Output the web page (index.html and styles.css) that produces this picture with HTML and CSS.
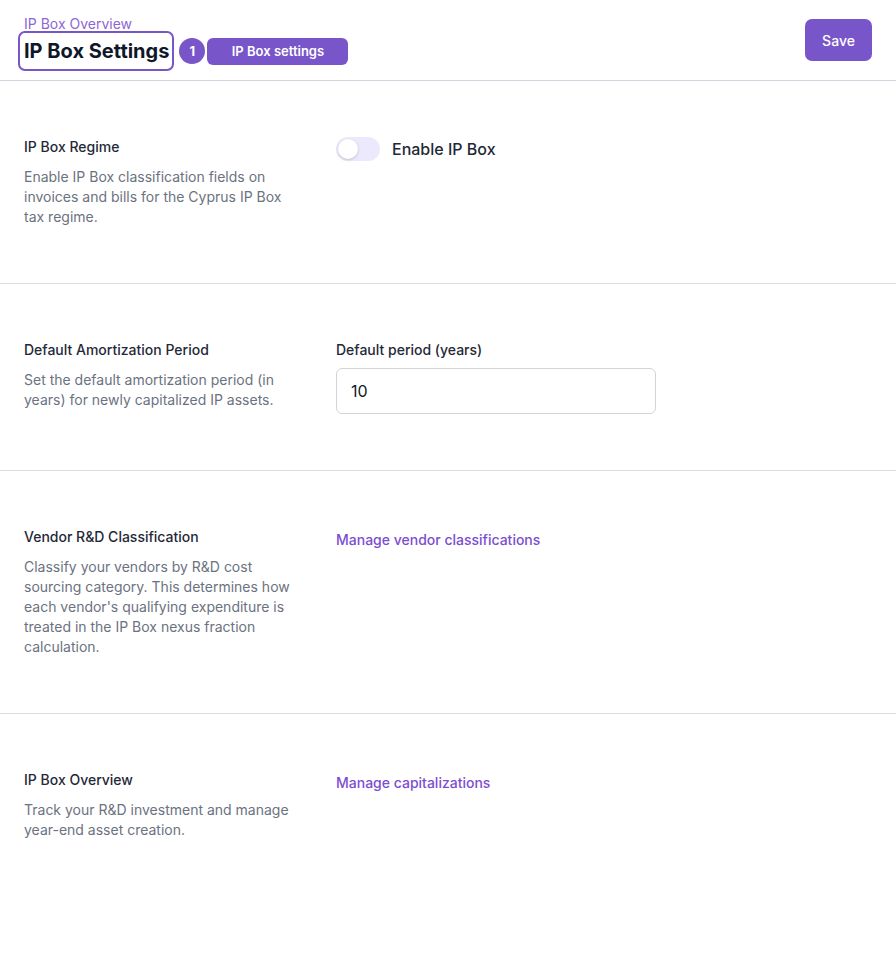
FILE: index.html
```html
<!DOCTYPE html>
<html lang="en">
<head>
<meta charset="utf-8">
<title>IP Box Settings</title>
<link rel="stylesheet" href="styles.css">
</head>
<body>
<header class="page-header">
  <div class="header-left">
    <a class="breadcrumb" href="#">IP Box Overview</a>
    <div class="title-row">
      <h1 class="title">IP Box Settings</h1>
      <span class="step-badge">1</span>
      <span class="step-pill">IP Box settings</span>
    </div>
  </div>
  <button class="btn-save" type="button">Save</button>
</header>

<main>
  <section class="setting">
    <div class="setting-info">
      <h2 class="setting-title">IP Box Regime</h2>
      <p class="setting-desc">Enable IP Box classification fields on invoices and bills for the Cyprus IP Box tax regime.</p>
    </div>
    <div class="setting-control">
      <label class="toggle-row">
        <span class="toggle"><span class="knob"></span></span>
        <span class="toggle-label">Enable IP Box</span>
      </label>
    </div>
  </section>

  <section class="setting">
    <div class="setting-info">
      <h2 class="setting-title">Default Amortization Period</h2>
      <p class="setting-desc">Set the default amortization period (in years) for newly capitalized IP assets.</p>
    </div>
    <div class="setting-control">
      <label class="field-label" for="period">Default period (years)</label>
      <input id="period" class="text-input" type="text" value="10">
    </div>
  </section>

  <section class="setting">
    <div class="setting-info">
      <h2 class="setting-title">Vendor R&amp;D Classification</h2>
      <p class="setting-desc">Classify your vendors by R&amp;D cost sourcing category. This determines how each vendor's qualifying expenditure is treated in the IP Box nexus fraction calculation.</p>
    </div>
    <div class="setting-control">
      <a class="link" href="#">Manage vendor classifications</a>
    </div>
  </section>

  <section class="setting last">
    <div class="setting-info">
      <h2 class="setting-title">IP Box Overview</h2>
      <p class="setting-desc">Track your R&amp;D investment and manage year-end asset creation.</p>
    </div>
    <div class="setting-control">
      <a class="link" href="#">Manage capitalizations</a>
    </div>
  </section>
</main>
</body>
</html>
```

FILE: styles.css
```css
* { box-sizing: border-box; }

body {
  margin: 0;
  background: #ffffff;
  font-family: Inter, "Noto Sans", sans-serif;
  color: #111827;
}

.page-header {
  display: flex;
  justify-content: space-between;
  align-items: flex-start;
  padding: 15px 24px 0 24px;
  height: 81px;
  border-bottom: 1px solid #d6d3e0;
}

.header-left {
  display: flex;
  flex-direction: column;
}

.breadcrumb {
  font-size: 14px;
  line-height: 18px;
  color: #8d66d6;
  text-decoration: underline;
  text-decoration-thickness: 1px;
  text-underline-offset: 2px;
}

.title-row {
  display: flex;
  align-items: center;
  margin-top: 4px;
}

.title {
  position: relative;
  margin: 0;
  font-size: 20px;
  line-height: 28px;
  font-weight: 700;
  color: #0f172a;
}

.title::after {
  content: "";
  position: absolute;
  top: -6px;
  bottom: -6px;
  left: -6px;
  right: -5px;
  border: 2px solid #7856c9;
  border-radius: 7px;
}

.step-badge {
  margin-left: 10px;
  width: 26px;
  height: 26px;
  border-radius: 50%;
  background: #7856c9;
  color: #ffffff;
  font-size: 13px;
  font-weight: 700;
  display: flex;
  align-items: center;
  justify-content: center;
}

.step-pill {
  margin-left: 2px;
  width: 141px;
  height: 27px;
  border-radius: 6px;
  background: #7856c9;
  color: #ffffff;
  font-size: 13px;
  font-weight: 600;
  display: flex;
  align-items: center;
  justify-content: center;
}

.btn-save {
  margin-top: 4px;
  width: 67px;
  height: 42px;
  border: none;
  border-radius: 7px;
  background: #7856c9;
  color: #ffffff;
  font-family: Inter, "Noto Sans", sans-serif;
  font-size: 14px;
  font-weight: 500;
}

.setting {
  display: grid;
  grid-template-columns: 280px 1fr;
  column-gap: 32px;
  padding: 56px 24px;
  border-bottom: 1px solid #dedde3;
}

.setting.last {
  border-bottom: none;
}

.setting-title {
  margin: 0;
  font-size: 14px;
  line-height: 20px;
  font-weight: 500;
  color: #1f2937;
}

.setting-desc {
  margin: 10px 0 0 0;
  font-size: 14px;
  line-height: 20px;
  color: #6b7280;
}

.setting-control {
  display: flex;
  flex-direction: column;
  align-items: flex-start;
}

.toggle-row {
  display: flex;
  align-items: center;
  gap: 12px;
  margin-top: 0;
}

.toggle {
  position: relative;
  width: 44px;
  height: 24px;
  border-radius: 12px;
  background: #ebe9fb;
  display: block;
}

.knob {
  position: absolute;
  top: 2px;
  left: 2px;
  width: 20px;
  height: 20px;
  border-radius: 50%;
  background: #ffffff;
  box-shadow: 0 1px 3px rgba(0, 0, 0, 0.18);
}

.toggle-label {
  font-size: 16px;
  line-height: 24px;
  font-weight: 500;
  color: #1f2937;
}

.field-label {
  font-size: 14px;
  line-height: 20px;
  font-weight: 500;
  color: #1f2937;
}

.text-input {
  margin-top: 8px;
  width: 320px;
  height: 46px;
  padding: 0 14px;
  border: 1px solid #d1d5db;
  border-radius: 6px;
  font-family: Inter, "Noto Sans", sans-serif;
  font-size: 16px;
  color: #111827;
  background: #ffffff;
}

.link {
  margin-top: 3px;
  font-size: 14px;
  line-height: 20px;
  font-weight: 500;
  color: #7c4dd1;
  text-decoration: none;
}
```
